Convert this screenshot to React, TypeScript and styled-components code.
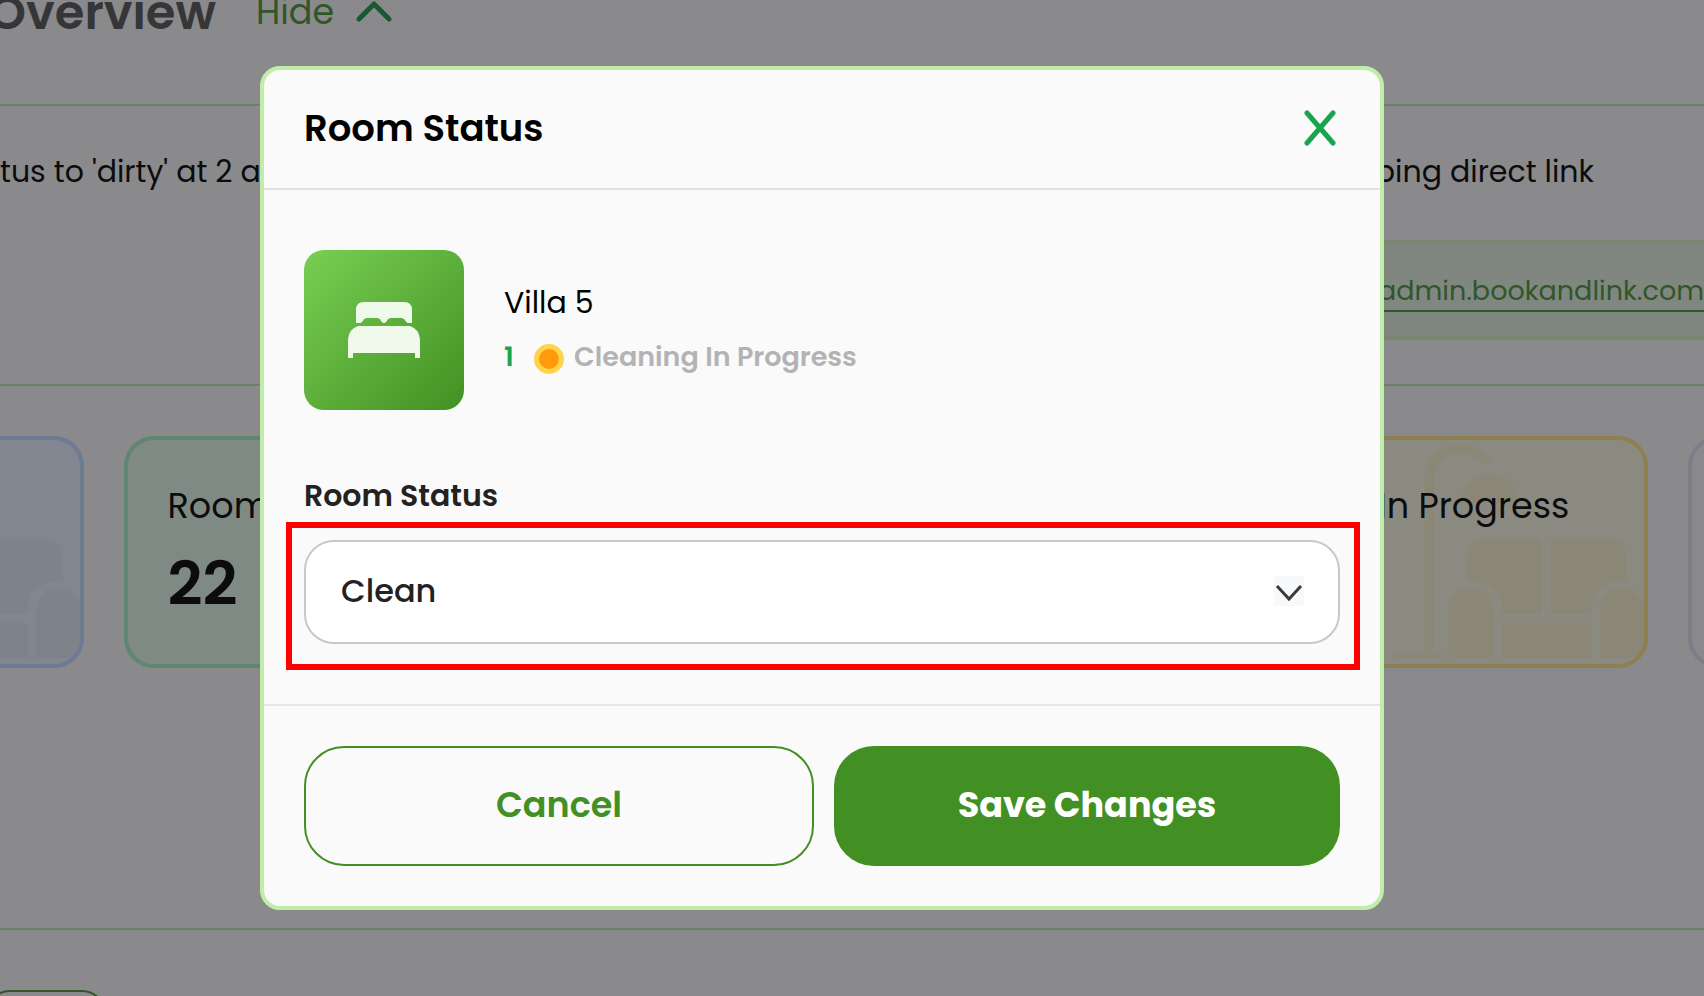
import React, { useState } from "react";
import styled, { createGlobalStyle } from "styled-components";

const GlobalStyle = createGlobalStyle`
  * { box-sizing: border-box; }
  body {
    margin: 0;
    background: #8a8a8c;
    color: #0c0c0e;
    font-family: Poppins, Inter, "Liberation Sans", sans-serif;
    overflow: hidden;
  }
  h1, h2, p { margin: 0; }
  button, select { font-family: inherit; }
`;

const Page = styled.div`
  height: 100vh;
  overflow: hidden;
`;

const TopBar = styled.header`
  display: flex;
  align-items: flex-start;
  height: 106px;
  border-bottom: 2px solid #6c8268;
`;

const TitleClip = styled.div`
  display: flex;
  justify-content: flex-end;
  width: 216px;
  margin-top: -16px;
`;

const PageTitle = styled.h1`
  font-size: 48px;
  line-height: 58px;
  font-weight: 600;
  color: #363638;
`;

const HideButton = styled.button`
  display: flex;
  align-items: center;
  gap: 22px;
  margin: -8px 0 0 40px;
  padding: 0;
  border: 0;
  background: none;
  color: #30562a;
  font-size: 35px;
  line-height: 40px;
`;

const InfoRow = styled.section`
  display: flex;
  justify-content: space-between;
  height: 280px;
  border-bottom: 2px solid #6c8263;
`;

const InfoText = styled.p`
  padding-top: 46px;
  font-size: 30px;
  line-height: 40px;
  white-space: nowrap;
`;

const LinkColumn = styled.div`
  width: 340px;
`;

const LinkLabel = styled.p`
  display: flex;
  justify-content: flex-end;
  padding: 46px 110px 0 0;
  font-size: 30px;
  line-height: 40px;
  white-space: nowrap;
`;

const LinkBox = styled.div`
  height: 100px;
  margin-top: 48px;
  padding-top: 26px;
  border-top: 4px solid #788672;
  border-bottom: 4px solid #788672;
  background: #808780;
`;

const DirectLink = styled.a`
  display: flex;
  justify-content: flex-end;
  height: 42px;
  border-bottom: 2px solid #30562a;
  color: #30562a;
  font-size: 27px;
  line-height: 42px;
  text-decoration: none;
  white-space: nowrap;
`;

const CardRow = styled.section`
  display: flex;
  gap: 40px;
  height: 544px;
  margin: 0 -466px 0 -398px;
  padding-top: 50px;
  border-bottom: 2px solid #6c8268;
`;

const Card = styled.article<{ $edge: string; $fill: string; $art: string }>`
  position: relative;
  flex: 1;
  height: 232px;
  padding: 44px 40px 0;
  border: 4px solid ${(p) => p.$edge};
  border-radius: 30px;
  background: ${(p) => p.$fill};
  color: ${(p) => p.$art};
  overflow: hidden;
`;

const CardArt = styled.svg`
  position: absolute;
  right: 0;
  bottom: 0;
`;

const CardLabel = styled.p`
  position: relative;
  color: #0c0c0e;
  font-size: 35px;
  line-height: 44px;
  white-space: nowrap;
`;

const CardCount = styled.p`
  margin-top: 20px;
  color: #0c0c0e;
  font-size: 61px;
  line-height: 72px;
  font-weight: 600;
`;

const BottomButton = styled.button`
  display: block;
  width: 120px;
  height: 80px;
  margin: 60px 0 0 -14px;
  border: 2px solid #30562a;
  border-radius: 24px;
  background: none;
`;

const ModalLayer = styled.div`
  position: fixed;
  inset: 0;
  display: flex;
  align-items: flex-start;
  padding: 66px 320px 0 260px;
`;

const Modal = styled.div`
  flex: 1;
  border: 4px solid #c0eda9;
  border-radius: 20px;
  background: #fafafa;
  color: #000;
`;

const ModalHeader = styled.div`
  display: flex;
  align-items: center;
  justify-content: space-between;
  height: 120px;
  padding: 0 44px 2px 40px;
  border-bottom: 2px solid #e2e2e2;
`;

const ModalTitle = styled.h2`
  font-size: 37px;
  line-height: 48px;
  font-weight: 600;
`;

const CloseButton = styled.button`
  display: flex;
  padding: 0;
  border: 0;
  background: none;
  color: #19a550;
`;

const ModalBody = styled.div`
  padding: 60px 40px 34px;
`;

const Room = styled.div`
  display: flex;
  align-items: center;
  gap: 40px;
`;

const RoomTile = styled.div`
  display: flex;
  align-items: center;
  justify-content: center;
  width: 160px;
  height: 160px;
  border-radius: 20px;
  background: linear-gradient(135deg, #78cf52, #429023);
`;

const RoomName = styled.p`
  font-size: 30px;
  line-height: 40px;
`;

const RoomState = styled.p`
  display: flex;
  align-items: center;
  margin-top: 14px;
  color: #b3b3b3;
  font-size: 27px;
  line-height: 40px;
  font-weight: 600;
`;

const RoomNumber = styled.span`
  width: 30px;
  color: #19a550;
`;

const StateDot = styled.span`
  width: 30px;
  height: 30px;
  margin: 4px 10px 0 0;
  border: 5px solid #ffd44c;
  border-radius: 50%;
  background: #ff9a0d;
`;

const FieldLabel = styled.label`
  display: block;
  margin-top: 66px;
  color: #222;
  font-size: 30px;
  line-height: 40px;
  font-weight: 600;
`;

const Highlight = styled.div`
  margin: 6px -20px 0 -18px;
  padding: 12px 14px 20px 12px;
  border: 6px solid #f00;
`;

const SelectBox = styled.div`
  position: relative;
`;

const StatusSelect = styled.select`
  display: block;
  appearance: none;
  width: 100%;
  height: 104px;
  padding: 0 80px 4px 35px;
  border: 2px solid #c8c8c8;
  border-radius: 30px;
  background: #fff;
  color: #222;
  font-size: 32px;
  font-weight: 500;
`;

const SelectArrow = styled.svg`
  position: absolute;
  top: 36px;
  right: 36px;
  background: #f8f9fb;
  pointer-events: none;
`;

const ModalFooter = styled.div`
  display: flex;
  gap: 20px;
  padding: 40px;
  border-top: 2px solid #e5e6e9;
`;

const ActionButton = styled.button<{ $primary?: boolean }>`
  flex: 1;
  box-sizing: content-box;
  height: ${(p) => (p.$primary ? 116 : 112)}px;
  padding: 0 0 4px;
  border: ${(p) => (p.$primary ? "0" : "2px solid #429023")};
  border-radius: 40px;
  background: ${(p) => (p.$primary ? "#429023" : "transparent")};
  color: ${(p) => (p.$primary ? "#fff" : "#429023")};
  font-size: 35px;
  font-weight: ${(p) => (p.$primary ? 700 : 600)};
`;

const LoungeArt = () => (
  <CardArt width="256" height="224" viewBox="0 0 256 224" fill="currentColor" aria-hidden="true">
    <path d="M41 214V44C41 2 84 0 100 22" fill="none" stroke="currentColor" strokeWidth="9" />
    <path d="M5 218q0-5 5-5h40q5 0 5 5zM74 63C74 25 130 25 130 63z" />
    <path d="M79 140V119Q79 99 99 99H151Q154 99 154 102V171Q154 174 151 174H117Q114 174 114 171V165Q112 142 79 140z" />
    <path d="M239 140V119Q239 99 219 99H166Q163 99 163 102V171Q163 174 166 174H201Q204 174 204 171V165Q206 142 239 140z" />
    <path d="M60 170a22 22 0 0 1 45 0v48H68q-8 0-8-8zM212 170a22 22 0 0 1 44 0v40q0 8-8 8h-36zM114 183h90v35h-90z" />
  </CardArt>
);

export default function App() {
  const [status, setStatus] = useState("Clean");
  return (
    <>
      <GlobalStyle />
      <Page>
        <TopBar>
          <TitleClip>
            <PageTitle>Overview</PageTitle>
          </TitleClip>
          <HideButton type="button">
            Hide
            <svg width="36" height="24" viewBox="0 0 36 24" fill="none" stroke="#1a5733" strokeWidth="5" strokeLinecap="round" strokeLinejoin="round" aria-hidden="true">
              <path d="M3 19L18 4l15 15" />
            </svg>
          </HideButton>
        </TopBar>
        <InfoRow>
          <InfoText>tus to 'dirty' at 2 a</InfoText>
          <LinkColumn>
            <LinkLabel>ping direct link</LinkLabel>
            <LinkBox>
              <DirectLink href="#link">admin.bookandlink.com</DirectLink>
            </LinkBox>
          </LinkColumn>
        </InfoRow>
        <CardRow>
          <Card $edge="#6c7a92" $fill="#828690" $art="#7d828b">
            <LoungeArt />
          </Card>
          <Card $edge="#5f8672" $fill="#808a85" $art="#7c8781">
            <CardLabel>Room</CardLabel>
            <CardCount>22</CardCount>
          </Card>
          <Card $edge="#8a8a8c" $fill="#8a8a8c" $art="#8a8a8c" />
          <Card $edge="#8e7f4e" $fill="#8a8a80" $art="#8a8776">
            <LoungeArt />
            <CardLabel>Cleaning In Progress</CardLabel>
          </Card>
          <Card $edge="#7f7c88" $fill="#89898b" $art="#89898b" />
        </CardRow>
        <BottomButton type="button" aria-label="More" />
      </Page>

      <ModalLayer>
        <Modal role="dialog" aria-modal="true" aria-labelledby="room-status-title">
          <ModalHeader>
            <ModalTitle id="room-status-title">Room Status</ModalTitle>
            <CloseButton type="button" aria-label="Close">
              <svg width="32" height="36" viewBox="0 0 32 36" fill="none" stroke="currentColor" strokeWidth="5" strokeLinecap="round" aria-hidden="true">
                <path d="M3 3l26 30M29 3L3 33" />
              </svg>
            </CloseButton>
          </ModalHeader>
          <ModalBody>
            <Room>
              <RoomTile>
                <svg width="72" height="56" viewBox="0 0 72 56" fill="#f0faea" aria-hidden="true">
                  <path d="M8 21V8q0-8 8-8h40q8 0 8 8v13h-4c-2 0-3-5-7-5H43c-4 0-4 5-7 5s-3-5-7-5H19c-4 0-4 5-7 5z" />
                  <path d="M0 56V37Q1 27 10 24H62Q71 27 72 37V56H67V51H5V56z" />
                </svg>
              </RoomTile>
              <div>
                <RoomName>Villa 5</RoomName>
                <RoomState>
                  <RoomNumber>1</RoomNumber>
                  <StateDot />
                  Cleaning In Progress
                </RoomState>
              </div>
            </Room>
            <FieldLabel htmlFor="room-status">Room Status</FieldLabel>
            <Highlight>
              <SelectBox>
                <StatusSelect id="room-status" value={status} onChange={(e) => setStatus(e.target.value)}>
                  <option>Clean</option>
                </StatusSelect>
                <SelectArrow width="30" height="30" viewBox="0 0 30 30" fill="none" stroke="#3b3b3b" strokeWidth="3" aria-hidden="true">
                  <path d="M3 10l12 13 12-13" />
                </SelectArrow>
              </SelectBox>
            </Highlight>
          </ModalBody>
          <ModalFooter>
            <ActionButton type="button">Cancel</ActionButton>
            <ActionButton type="button" $primary>
              Save Changes
            </ActionButton>
          </ModalFooter>
        </Modal>
      </ModalLayer>
    </>
  );
}
